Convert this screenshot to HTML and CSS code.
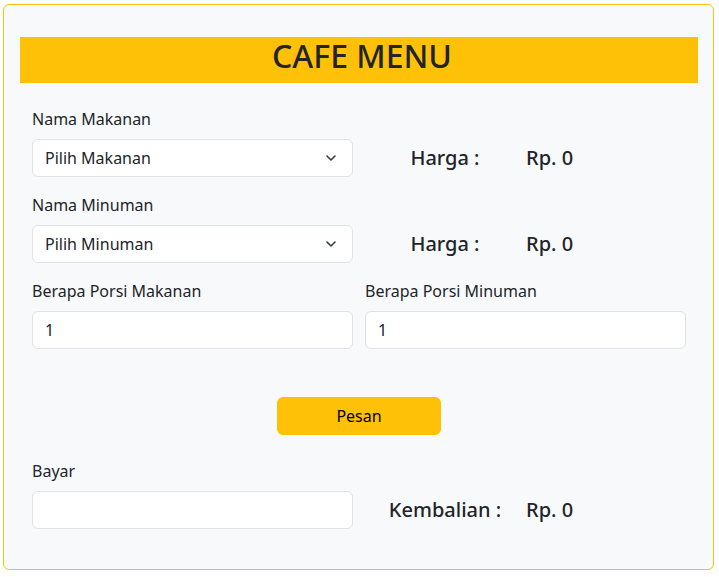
FILE: index.html
```html
<!DOCTYPE html>
<html lang="id">
<head>
<meta charset="utf-8">
<title>Cafe Menu</title>
<link rel="stylesheet" href="styles.css">
</head>
<body>
<div class="card">
  <h1 class="title">CAFE MENU</h1>
  <form class="form">
    <div class="row">
      <div class="field">
        <label class="label">Nama Makanan</label>
        <div class="select-wrap">
          <select class="control select"><option>Pilih Makanan</option></select>
          <svg class="chev" viewBox="0 0 10 6" width="10" height="6"><path d="M1 1 5 5 9 1" fill="none" stroke="#343a40" stroke-width="1.6" stroke-linecap="round" stroke-linejoin="round"/></svg>
        </div>
      </div>
      <div class="price">
        <span class="price-label">Harga :</span>
        <span class="price-value">Rp. 0</span>
      </div>
    </div>
    <div class="row">
      <div class="field">
        <label class="label">Nama Minuman</label>
        <div class="select-wrap">
          <select class="control select"><option>Pilih Minuman</option></select>
          <svg class="chev" viewBox="0 0 10 6" width="10" height="6"><path d="M1 1 5 5 9 1" fill="none" stroke="#343a40" stroke-width="1.6" stroke-linecap="round" stroke-linejoin="round"/></svg>
        </div>
      </div>
      <div class="price">
        <span class="price-label">Harga :</span>
        <span class="price-value">Rp. 0</span>
      </div>
    </div>
    <div class="row">
      <div class="field">
        <label class="label">Berapa Porsi Makanan</label>
        <input class="control" type="text" value="1">
      </div>
      <div class="field">
        <label class="label">Berapa Porsi Minuman</label>
        <input class="control" type="text" value="1">
      </div>
    </div>
    <div class="actions">
      <button class="btn" type="button">Pesan</button>
    </div>
    <div class="row last">
      <div class="field">
        <label class="label">Bayar</label>
        <input class="control" type="text" value="">
      </div>
      <div class="price">
        <span class="price-label">Kembalian :</span>
        <span class="price-value">Rp. 0</span>
      </div>
    </div>
  </form>
</div>
</body>
</html>
```
FILE: styles.css
```css
* { box-sizing: border-box; }
body {
  margin: 4px 5px 7px 3px;
  font-family: "Noto Sans", "Open Sans", sans-serif;
  color: #212529;
  background: #fff;
}
.card {
  border: 1px solid #ffc107;
  border-radius: 6px;
  background: #f8f9fa;
  padding: 32px 15px 40px 16px;
}
.title {
  margin: 0;
  background: #ffc107;
  height: 46px;
  font-size: 32px;
  font-weight: 500;
  line-height: 38px;
  text-align: center;
  color: #212529;
  padding-left: 6px;
}
.form {
  padding: 24px 12px 0 12px;
}
.row {
  display: grid;
  grid-template-columns: 321px 321px;
  column-gap: 12px;
  margin-bottom: 16px;
}
.row.last { margin-bottom: 0; }
.field { display: flex; flex-direction: column; }
.label {
  display: block;
  font-size: 16px;
  line-height: 24px;
  margin-bottom: 8px;
}
.control {
  display: block;
  width: 100%;
  height: 38px;
  padding: 6px 12px;
  border: 1px solid #dee2e6;
  border-radius: 6px;
  background: #fff;
  font-family: inherit;
  font-size: 16px;
  line-height: 24px;
  color: #212529;
  outline: none;
}
.select-wrap { position: relative; }
.select {
  appearance: none;
  -webkit-appearance: none;
  padding-right: 36px;
}
.chev {
  position: absolute;
  right: 17px;
  top: 16px;
  pointer-events: none;
}
.price {
  align-self: end;
  height: 36px;
  margin-bottom: 2px;
  display: flex;
  align-items: center;
  font-size: 20px;
  font-weight: 500;
}
.price-label {
  width: 160px;
  text-align: center;
}
.price-value { padding-left: 1px; }
.actions {
  display: flex;
  justify-content: center;
  margin: 48px 0 24px;
}
.btn {
  width: 164px;
  height: 38px;
  border: 1px solid #ffc107;
  border-radius: 6px;
  background: #ffc107;
  font-family: inherit;
  font-size: 16px;
  color: #000;
}
```
